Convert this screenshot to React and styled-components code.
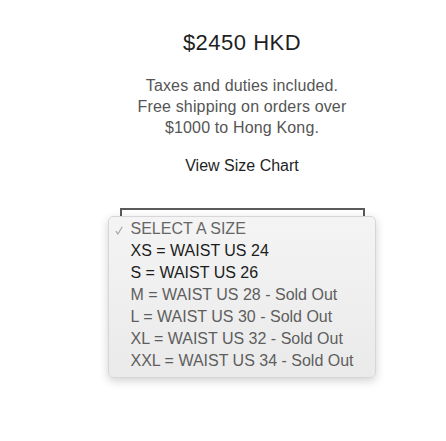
import React from "react";
import styled, { createGlobalStyle } from "styled-components";

const Global = createGlobalStyle`
  html, body {
    margin: 0;
    padding: 0;
    background: #ffffff;
    font-family: "Liberation Sans", Arial, sans-serif;
  }
`;

const Page = styled.div`
  display: flex;
  flex-direction: column;
  align-items: center;
  padding: 30px 0 0 38px;
  height: 441px;
  box-sizing: border-box;
`;

const Price = styled.div`
  font-size: 22px;
  line-height: 26px;
  color: #1f1f1f;
  letter-spacing: 0.5px;
`;

const Note = styled.p`
  margin: 19px 0 0;
  font-size: 16px;
  line-height: 21px;
  color: #555555;
  text-align: center;
  letter-spacing: 0.15px;
`;

const ChartLink = styled.a`
  margin-top: 18px;
  font-size: 16px;
  line-height: 20px;
  color: #1f1f1f;
  text-decoration: none;
`;

const SelectWrap = styled.div`
  position: relative;
  margin-top: 32px;
  width: 245px;
  height: 40px;
  box-sizing: border-box;
  border: 2px solid #5a5a5a;
`;

const Menu = styled.ul`
  position: absolute;
  left: -14px;
  top: 6px;
  width: 268px;
  margin: 0;
  padding: 1px 0 5px;
  list-style: none;
  box-sizing: border-box;
  border-radius: 5px;
  border: 1px solid #d6d6d6;
  background: linear-gradient(#f4f4f4, #eaeaea);
  box-shadow: 0 3px 10px rgba(0, 0, 0, 0.18);
`;

const Option = styled.li`
  position: relative;
  padding-left: 22px;
  font-size: 16px;
  line-height: 22px;
  color: ${(p) => (p.$tone === "dark" ? "#1c1c1c" : p.$tone === "muted" ? "#666666" : "#5e5e5e")};
  white-space: nowrap;
`;

const Check = styled.svg`
  position: absolute;
  left: 6px;
  top: 8px;
`;

const options = [
  { label: "SELECT A SIZE", tone: "muted", checked: true },
  { label: "XS = WAIST US 24", tone: "dark" },
  { label: "S = WAIST US 26", tone: "dark" },
  { label: "M = WAIST US 28 - Sold Out", tone: "soft" },
  { label: "L = WAIST US 30 - Sold Out", tone: "soft" },
  { label: "XL = WAIST US 32 - Sold Out", tone: "soft" },
  { label: "XXL = WAIST US 34 - Sold Out", tone: "soft" },
];

export default function App() {
  return (
    <>
      <Global />
      <Page>
        <Price>$2450 HKD</Price>
        <Note>
          Taxes and duties included.
          <br />
          Free shipping on orders over
          <br />
          $1000 to Hong Kong.
        </Note>
        <ChartLink href="#">View Size Chart</ChartLink>
        <SelectWrap>
          <Menu>
            {options.map((o) => (
              <Option key={o.label} $tone={o.tone}>
                {o.checked && (
                  <Check width="8" height="9" viewBox="0 0 8 9">
                    <path d="M0.8 5 L2.9 8 L7.3 0.8" fill="none" stroke="#a6a6a6" strokeWidth="1.2" />
                  </Check>
                )}
                {o.label}
              </Option>
            ))}
          </Menu>
        </SelectWrap>
      </Page>
    </>
  );
}
